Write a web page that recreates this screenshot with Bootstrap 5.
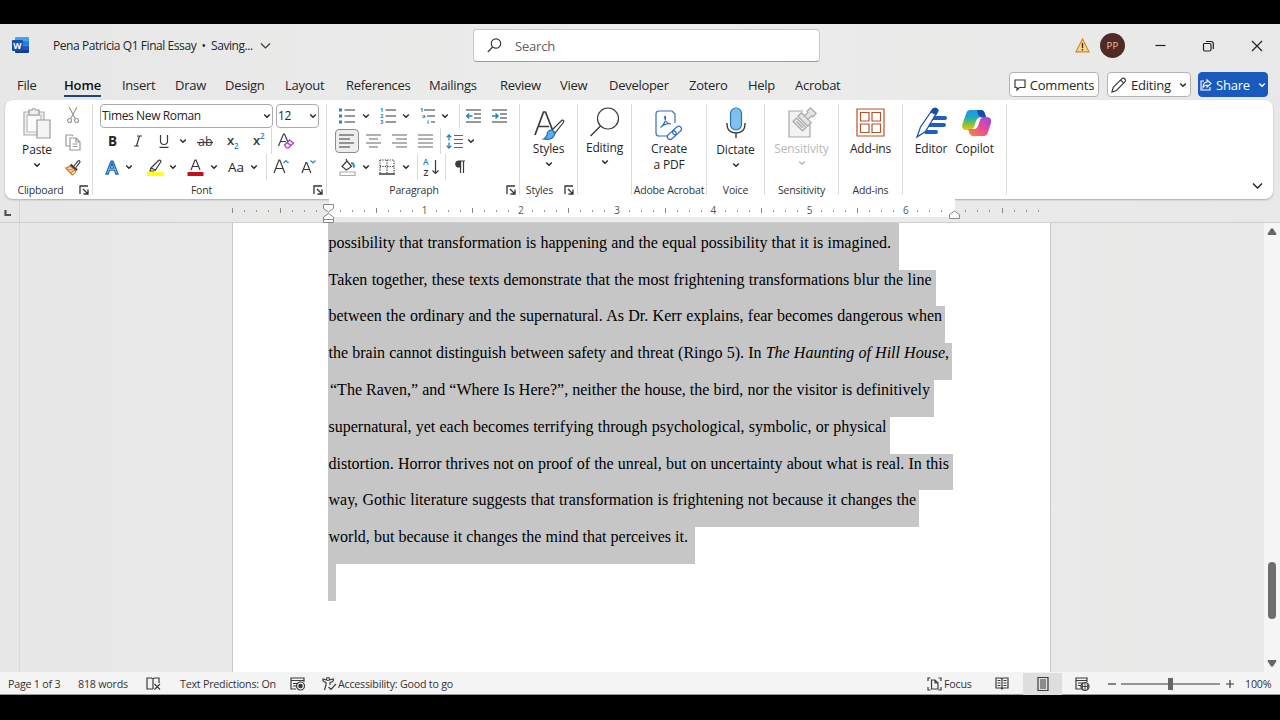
<!DOCTYPE html>
<html lang="en">
<head>
<meta charset="utf-8">
<title>Pena Patricia Q1 Final Essay - Word</title>
<link href="https://cdn.jsdelivr.net/npm/bootstrap@5.3.0/dist/css/bootstrap.min.css" rel="stylesheet">
<style>
body{width:1280px;height:720px;overflow:hidden;background:#000;color:#262626;font-family:"Open Sans","Noto Sans",sans-serif;font-size:12px;line-height:16px}
svg{display:block;flex:none;fill:none;stroke:#3b3b3b;stroke-width:1.2;overflow:visible}
svg text{stroke:none;fill:#3b3b3b}
.app{margin-top:24px;height:671px;background:linear-gradient(90deg,#e7e7e7,#ececeb 50%,#e8e8e8)}
.titlebar{height:42px;padding-top:1px}
.wlogo{margin-left:12px;width:18px}
.doctitle{margin-left:23px;font-size:12px;letter-spacing:-.43px;width:207px;white-space:pre;padding-top:1px}
.search{width:347px;height:33px;margin-left:201px;background:#fff;border:1px solid #c9c9c9;border-bottom-color:#9a9a9a;border-radius:4px;color:#606060;font-size:13px;letter-spacing:-.2px;padding-left:13px;gap:13px}
.warn{margin-right:2px}
.avatar{width:25px;height:25px;border-radius:50%;background:#4e2b26;color:#efc5a8;font-size:9.5px;letter-spacing:.2px}
.tabs{height:34px}
.tabgrid{display:grid;grid-template-columns:47px 58px 53px 50px 60px 61px 83px 71px 60px 49px 80px 59px 47px 60px;margin-left:17px;font-size:13px;letter-spacing:-.28px;width:980px;padding-top:8px}
.tabgrid span{justify-self:start;height:23px;padding-top:1px;line-height:20px;white-space:nowrap}
.tabgrid .on{font-weight:600;letter-spacing:-.15px;border-bottom:2px solid #1c4587;color:#111}
.pill{height:25px;margin-top:6px;border:1px solid #b3b3b3;border-radius:4px;background:#fff;font-size:13px;letter-spacing:-.22px;white-space:nowrap}
.p1{width:90px;margin-left:12px}.p2{width:84px;margin-left:8px}.p3{width:70px;margin-left:7px;background:#1a5abf;border-color:#1a5abf;color:#fff}
.ribbon{margin-left:5px;width:1268px;height:99px;background:#fff;border-radius:8px;box-shadow:0 1px 2px #aaa}
.grp{position:relative;height:91px;margin-top:4px;border-right:1px solid #dcdcdc;flex:none}
.grp .cap{height:14px;margin-bottom:-2px;font-size:10.5px;line-height:14px;letter-spacing:-.17px;text-align:center;white-space:nowrap;color:#333;position:relative;top:-.5px}
.launch{position:absolute;right:3px;bottom:0}
.g1{width:88px}.g2{width:234px}.g3{width:193px}.g4{width:58px}.g5{width:54px}.g6{width:75px}.g7{width:58px}.g8{width:74px}.g9{width:64px}.g10{width:104px}
.ctl{height:26px}.ctl>*{flex:none;display:flex;align-items:center;justify-content:center;height:26px}
.ctl.top{height:24px}.ctl.top>*{height:24px}
.u1{width:1px}.u2{width:2px}.u4{width:4px}.u6{width:6px}.u7{width:7px}.u8{width:8px}.u10{width:10px}.u12{width:12px}.u14{width:14px}.u16{width:16px}.u20{width:20px}.u22{width:22px}.u24{width:24px}.u25{width:25px}.u26{width:26px}.u28{width:28px}.u30{width:30px}
.bold-b{font-size:13.5px}
.aa{font-size:13.5px}
.vr1{width:1px;background:#d9d9d9}
.box{height:24px!important;border:1px solid #aaa;border-radius:4px;justify-content:space-between!important;padding:0 1px;letter-spacing:-.37px}
.fname{width:173px}.fsize{width:43px;margin-left:3px}
.big{font-size:12px;letter-spacing:-.15px;line-height:15.5px;text-align:center;color:#262626;white-space:nowrap}
.big .chev{margin:4px auto 0}
.ico{height:37px;display:flex;align-items:center;justify-content:center}
.ico.lift{height:35.5px}
.ico.tall{height:38px}
.paste{width:64px}.clipcol{width:8px;padding-top:3px;gap:11px}
.active-btn{background:#ededed;border:1px solid #8c8c8c;border-radius:4px;height:24px!important;width:24px;margin:0 1px}
.ruler{height:24px;border-bottom:1px solid #cfcfcf;position:relative}
.corner{width:20px;border-right:1px solid #d5d5d5}
.scale{margin-left:206px;width:820px;height:19px;background:linear-gradient(#fff,#fff) 102.5px 0/626px 18px no-repeat}
.scale span{flex:0 0 12.04px;height:23px;line-height:23px;text-align:center;font-size:10px;color:#555}
.tick::before{content:"";display:inline-block;width:1px;height:5px;background:#888;vertical-align:1px}
.dot::before{content:"";display:inline-block;width:1px;height:2px;background:#999;vertical-align:2px}
.marker{position:absolute}
.m1{left:323px;top:1px}.m2{left:949px;top:0}
.canvas{height:449px}
.gutter{width:20px;border-right:1px solid #d9d9d9}
.desk{width:1244px;padding-left:212px}
.sheet{width:819px;height:449px;background:#fff;border:solid #c8c8c8;border-width:0 1px;padding-left:95px;overflow:hidden;font-family:"Liberation Serif",serif;font-size:16px;line-height:20px;color:#000}
.sel{height:36.84px;background:#c6c6c6;text-align:justify;text-align-last:justify;white-space:nowrap;padding-left:.5px}
.sel:first-child{height:46.5px;padding-top:9.5px;width:571px;padding-right:8px}
.sel:nth-child(2){width:607.5px;padding-right:4px}
.sel:nth-child(3){width:617px;padding-right:3px}
.sel:nth-child(4){width:624px;padding-right:3px}
.sel:nth-child(5){width:606px;padding-left:2px;padding-right:4px}
.sel:nth-child(6){width:562px;padding-right:3.5px}
.sel:nth-child(7){width:625px;padding-right:4px}
.sel:nth-child(8){width:591px;padding-right:3px}
.sel:nth-child(9){width:367px;padding-right:7px}
.sel:nth-child(10){width:8px}
.scroller{width:16px;background:#f5f5f5;padding:5px 0 5px}
.thumb{width:8px;height:57px;border-radius:4px;background:#6d6d6d;margin-top:327px}
.status{height:23px;padding-top:1px;background:#f4f4f4;border-bottom:1px solid #999;font-size:10.7px;letter-spacing:-.22px;color:#333;white-space:nowrap}
.status>*{flex:none}
.s1{margin-left:8px;width:70px}.s2{width:68px}.s3{width:34px}.s4{width:110px}.s5{width:32px}.s6{width:16px}.s7{width:589px}
.s8{width:17px}.s9{width:51px}.s10{width:28px}.viewon{width:39px;height:22px;background:#dedede}.s11{width:46px;padding-left:13px}.s12{width:13px}.s13{width:99px}.s14{width:25px;padding-left:6px}.s15{width:30px}
</style>
</head>
<body>
<svg width="0" height="0" class="position-absolute"><defs>
<symbol id="cv" viewBox="0 0 8 6"><path d="M1.2 1.5 4 4.2 6.8 1.5" stroke="currentColor" stroke-width="1.4" fill="none"/></symbol>
<symbol id="la" viewBox="0 0 10 10"><path d="M1 9V1H9M4 4l4.500 4.500M9 4.500V9H4.500" stroke="#333" stroke-width="1.300" fill="none"/></symbol>
<linearGradient id="ca" x1="0" y1="0" x2="0" y2="1"><stop offset="0" stop-color="#2294f5"/><stop offset=".35" stop-color="#18a9c4"/><stop offset=".7" stop-color="#7cc43c"/><stop offset="1" stop-color="#f5c50b"/></linearGradient>
<linearGradient id="cb" x1="1" y1="0" x2="0" y2="1"><stop offset="0" stop-color="#8d4be8"/><stop offset=".45" stop-color="#e5489b"/><stop offset="1" stop-color="#ff8a3c"/></linearGradient>
</defs></svg>
<main class="app">
<header class="titlebar d-flex align-items-center">
  <svg class="wlogo" width="18" height="17" viewBox="0 0 18 17"><g stroke="none"><path d="M4 0h12q1 0 1 1v4H3V1q0-1 1-1z" fill="#41a5ee"/><path d="M3 4.300h14v4.200H3z" fill="#2b7cd3"/><path d="M3 8.500h14v4H3z" fill="#185abd"/><path d="M3 12.300h14V15q0 1-1 1H4q-1 0-1-1z" fill="#103f91"/><rect y="3" width="11" height="11" rx="1" fill="#174fa8"/></g><text x="1.200" y="11.500" font-size="8.500" font-weight="700" style="fill:#fff">W</text></svg>
  <div class="doctitle">Pena Patricia Q1 Final Essay  •  Saving...</div>
  <svg width="12" height="8" viewBox="0 0 12 8"><path d="M1 1.500 5.500 6 10 1.500"/></svg>
  <div class="search d-flex align-items-center"><svg width="15" height="15" viewBox="0 0 15 15"><circle cx="9" cy="5.500" r="4.700"/><path d="M5.600 9 .8 14"/></svg><span>Search</span></div>
  <svg class="warn ms-auto" width="15" height="15" viewBox="0 0 15 15"><path d="M7.500 1 14 13.800H1z" fill="#fbd98a" stroke="#c98a2b"/><path d="M7.500 5v5M7.500 11v1.500" stroke="#333" stroke-width="1.400"/></svg>
  <div class="avatar d-flex align-items-center justify-content-center ms-2">PP</div>
  <svg width="155" height="14" viewBox="0 0 155 14"><path d="M30.500 6.500h10" stroke="#222"/><path d="M79 4.500h5.500q1.500 0 1.500 1.500v4.500q0 1.500-1.500 1.500H80q-1.500 0-1.500-1.500V5.500q0-1 .5-1zM81 2.500h5q2.300 0 2.300 2.300V10" stroke="#222"/><path d="M127 2l10 10M137 2l-10 10" stroke="#222"/></svg>
</header>
<nav class="tabs d-flex align-items-start">
  <div class="tabgrid"><span>File</span><span class="on">Home</span><span>Insert</span><span>Draw</span><span>Design</span><span>Layout</span><span>References</span><span>Mailings</span><span>Review</span><span>View</span><span>Developer</span><span>Zotero</span><span>Help</span><span>Acrobat</span></div>
  <div class="pill p1 d-flex align-items-center justify-content-center gap-1"><svg width="12" height="12" viewBox="0 0 12 12"><path d="M1 1h10v7.500H5.500L3 11V8.500H1z"/></svg>Comments</div>
  <div class="pill p2 d-flex align-items-center justify-content-center gap-1"><svg width="16" height="16" viewBox="0 0 16 16"><path d="M1 15l1.200-4.600L11 1.600q1.200-1.200 2.700.2t.4 2.800L5.400 13.500zM9.600 3l3.200 3.200"/></svg>Editing<svg class="ms-1" width="8" height="6"><use href="#cv"/></svg></div>
  <div class="pill p3 d-flex align-items-center justify-content-center gap-1"><svg width="12" height="12" viewBox="0 0 12 12"><path d="M4 2H1v9h9V8M7 1l4 3.500L7 8V6Q4.500 6 3 8.500 3 3.500 7 3z" stroke="#fff" stroke-width="1.100"/></svg>Share<svg class="ms-1" width="8" height="6"><use href="#cv"/></svg></div>
</nav>

<section class="ribbon d-flex">
  <div class="grp g1 d-flex flex-column">
    <div class="flex-grow-1 d-flex">
      <div class="big paste"><div class="ico tall"><svg width="28" height="32" viewBox="0 0 28 32"><path d="M1 5h20v23H1z" fill="#f1f1f1" stroke="#aaa"/><path d="M4 8h14v17H4z" fill="#fafafa" stroke="#bbb"/><path d="M6 3h3q1-3 4 0h3v5H6z" fill="#eee" stroke="#999"/><path d="M14 13h13v18H14z" fill="#f4f4f4" stroke="#999"/></svg></div><div>Paste</div><svg class="chev" width="8" height="6"><use href="#cv"/></svg></div>
      <div class="clipcol d-flex flex-column align-items-center">
        <svg width="12" height="16" viewBox="0 0 12 16"><g stroke="#999"><path d="M2 0l6.500 12M10 0 3.500 12"/><circle cx="2.500" cy="13.500" r="2"/><circle cx="9.500" cy="13.500" r="2"/></g></svg>
        <svg width="16" height="16" viewBox="0 0 16 16"><path d="M5 12H1V1h6l1 1M5 4h6l4 4v8H5zM11 4v4h4M7.500 10h5M7.500 12.500h5" stroke="#999"/></svg>
        <svg width="16" height="14" viewBox="0 1 16 14"><path d="M9 6l4-5q2-1 2 1l-4 5.500" fill="#fff"/><path d="M5 6Q3 8 .8 8l6.500 7q3.500-2 4-4.500z" fill="#fbe3c2" stroke="#d9781d"/><path d="M3 10l5-1M5.500 12.500l4.500-2.500" stroke="#d9781d"/><path d="M5.500 4.500l6.500 5.500" stroke-width="2.200"/></svg>
      </div>
    </div>
    <div class="cap pe-3">Clipboard</div><svg class="launch" width="10" height="10"><use href="#la"/></svg>
  </div>

  <div class="grp g2 d-flex flex-column">
    <div class="flex-grow-1" style="padding-left:7px">
      <div class="ctl top d-flex"><div class="box fname">Times New Roman<svg width="8" height="6"><use href="#cv"/></svg></div><div class="box fsize">12<svg width="8" height="6"><use href="#cv"/></svg></div></div>
      <div class="ctl d-flex">
        <b class="u25 bold-b">B</b>
        <span class="u26"><svg width="10" height="12" viewBox="0 0 10 12"><path d="M4 1h5M1 11h5M6.500 1l-3 10"/></svg></span>
        <span class="u25"><svg width="12" height="13" viewBox="0 0 12 13"><path d="M2.500 0v6q0 3.500 3.500 3.500T9.500 6V0M1.500 12.300h9"/></svg></span>
        <span class="u14"><svg width="8" height="6"><use href="#cv"/></svg></span>
        <span class="u30"><svg width="16" height="14"><text x="1" y="12" font-size="12.500">ab</text><path d="M0 8.500h16"/></svg></span>
        <span class="u26"><svg width="14" height="16"><text x="1" y="12" font-size="13" font-weight="600">x</text><text x="8" y="16" font-size="8" font-weight="600" style="fill:#1f86c7">2</text></svg></span>
        <span class="u25"><svg width="14" height="16"><text x="1" y="12" font-size="13" font-weight="600">x</text><text x="8" y="6" font-size="8" font-weight="600" style="fill:#1f86c7">2</text></svg></span>
        <span class="vr1"></span>
        <span class="u28"><svg width="16" height="16" viewBox="0 0 16 16"><path d="M.5 13 5.500 1h1l3.500 8M2.500 8.500H8"/><path d="M6.500 12l5-5 4 3-5 5h-2zM9 9.500l4 3" stroke="#9b3fb5" fill="#f6e6fa"/></svg></span>
      </div>
      <div class="ctl d-flex">
        <span class="u24"><svg width="14" height="15" viewBox="0 0 14 15"><path d="M1 14 6 1.200h2L13 14h-2.200L9.500 10.200h-5L3.200 14zM5.200 8.200h3.600L7 3z" fill="#bfe0f8" stroke="#1b6cb5" stroke-width="1.300"/></svg></span>
        <span class="u10"><svg width="8" height="6"><use href="#cv"/></svg></span><i class="u8"></i>
        <span class="u26"><svg width="17" height="17" viewBox="0 0 17 17"><path d="M4 9l7-7q2-2 3 .5L8.500 11zM4 9l-1 3h4l1.500-1.500"/><path d="M0 15h17" stroke="#ffff18" stroke-width="4"/></svg></span>
        <span class="u10"><svg width="8" height="6"><use href="#cv"/></svg></span><i class="u6"></i>
        <span class="u22"><svg width="17" height="17" viewBox="0 0 17 17"><path d="M4 11 8 1h1l4 10M5.500 7.500h6"/><path d="M.5 15h16" stroke="#c40f18" stroke-width="4"/></svg></span>
        <span class="u16"><svg width="8" height="6"><use href="#cv"/></svg></span>
        <span class="u28 aa">Aa</span><span class="u8"><svg width="8" height="6"><use href="#cv"/></svg></span><i class="u8"></i><span class="vr1"></span>
        <span class="u28"><svg width="16" height="16" viewBox="0 0 16 16"><path d="M1 14 6 1h.8l5 13M3 9.500h7"/><path d="M10.500 4 13 1.500 15.500 4" stroke="#1f86c7"/></svg></span>
        <span class="u26"><svg width="14" height="16" viewBox="0 0 14 16"><path d="M1 14 5 3.500h.8l4 10.500M2.500 10.500h6"/><path d="M9.500 1.500 12 4l2.500-2.500" stroke="#1f86c7"/></svg></span>
      </div>
    </div>
    <div class="cap pe-3">Font</div><svg class="launch" width="10" height="10"><use href="#la"/></svg>
  </div>

  <div class="grp g3 d-flex flex-column">
    <div class="flex-grow-1" style="padding-left:7px">
      <div class="ctl top d-flex">
        <span class="u26"><svg width="16" height="16" viewBox="0 0 16 16"><path d="M5.500 2H16M5.500 8H16M5.500 14H16" stroke="#777" stroke-width="1.300"/><path d="M0 2h3M0 8h3M0 14h3" stroke="#1f86c7" stroke-width="3"/></svg></span>
        <span class="u12"><svg width="8" height="6"><use href="#cv"/></svg></span><i class="u4"></i>
        <span class="u24"><svg width="16" height="16" viewBox="0 0 16 16"><path d="M5.500 2H16M5.500 8H16M5.500 14H16" stroke="#777" stroke-width="1.300"/><g font-size="6" font-weight="700"><text y="4" style="fill:#1f86c7">1</text><text y="10.200" style="fill:#1f86c7">2</text><text y="16.400" style="fill:#1f86c7">3</text></g></svg></span>
        <span class="u12"><svg width="8" height="6"><use href="#cv"/></svg></span><i class="u6"></i>
        <span class="u20"><svg width="16" height="16" viewBox="0 0 16 16"><path d="M4 2H15M7 8h8M11 14h4" stroke="#777" stroke-width="1.300"/><g font-size="6" font-weight="700"><text y="4" style="fill:#1f86c7">1</text><text x="2" y="10" style="fill:#1f86c7">a</text><text x="7" y="16.400" style="fill:#1f86c7">i</text></g></svg></span>
        <span class="u14"><svg width="8" height="6"><use href="#cv"/></svg></span><i class="u7"></i><span class="vr1"></span>
        <span class="u26"><svg width="15" height="14" viewBox="0 0 15 14"><path d="M0 1h15M8 5h7M8 9h7M0 13h15" stroke="#777" stroke-width="1.300"/><path d="M6.500 7H1M3.200 4.500.7 7l2.500 2.500" stroke="#1f86c7" stroke-width="1.500"/></svg></span>
        <span class="u26"><svg width="15" height="14" viewBox="0 0 15 14"><path d="M0 1h15M8 5h7M8 9h7M0 13h15" stroke="#777" stroke-width="1.300"/><path d="M0 7h5.500M3.500 4.500 6 7 3.500 9.500" stroke="#1f86c7" stroke-width="1.500"/></svg></span>
      </div>
      <div class="ctl d-flex align-items-center">
        <span class="active-btn"><svg width="16" height="14" viewBox="0 0 16 14"><path d="M0 1h15M0 5h11M0 9h15M0 13h11"/></svg></span>
        <span class="u26"><svg width="15" height="14" viewBox="0 0 15 14"><path d="M0 1h15M3 5h9M0 9h15M3 13h9" stroke="#666"/></svg></span>
        <span class="u26"><svg width="15" height="14" viewBox="0 0 15 14"><path d="M0 1h15M4 5h11M0 9h15M4 13h11" stroke="#666"/></svg></span>
        <span class="u26"><svg width="15" height="14" viewBox="0 0 15 14"><path d="M0 1h15M0 5h15M0 9h15M0 13h15" stroke="#666"/></svg></span>
        <i class="u2"></i><span class="vr1"></span>
        <span class="u26"><svg width="17" height="15" viewBox="0 0 17 15"><path d="M8 1.500h9M8 5.500h9M8 9.500h9M8 13.500h9" stroke="#666"/><path d="M3 1v5.500M.7 3.300 3 1l2.300 2.300M3 8.500V14M.7 11.700 3 14l2.300-2.300" stroke="#1f86c7" stroke-width="1.300"/></svg></span>
        <span class="u8"><svg width="8" height="6"><use href="#cv"/></svg></span>
      </div>
      <div class="ctl d-flex">
        <span class="u26"><svg width="17" height="17" viewBox="0 0 17 17"><path d="M3 7.500 8 2l4.500 5.500L7.500 11zM8 2 7 0"/><path d="M12 4.500q3-1 3 4" stroke="#1f86c7" stroke-width="2"/><path d="M1 13h15v3.500H1z" stroke="#aaa" fill="#fff"/></svg></span>
        <span class="u12"><svg width="8" height="6"><use href="#cv"/></svg></span><i class="u1"></i>
        <span class="u28"><svg width="16" height="16" viewBox="0 0 16 16"><path d="M1 1h14v13M1 1v13M8 1v13M1 7.500h14" stroke-dasharray="1.200 1.200"/><path d="M0 15h16" stroke-width="1.500"/></svg></span>
        <span class="u10"><svg width="8" height="6"><use href="#cv"/></svg></span><i class="u6"></i><span class="vr1"></span>
        <span class="u26"><svg width="18" height="18"><text x="1" y="7" font-size="8.500" font-weight="600" style="fill:#1f86c7">A</text><text x="1.500" y="18" font-size="8.500" font-weight="600">Z</text><path d="M13.500 2v13.500M10.500 12.500l3 3 3-3"/></svg></span>
        <i class="u1"></i><span class="vr1"></span>
        <span class="u28"><svg width="11" height="14" viewBox="0 0 11 14"><path d="M5.500 1H10M5.500 1v12M8.500 1v12"/><path d="M5.500 1H4Q.8 1 .8 4T4 7h1.500z" fill="#3b3b3b"/></svg></span>
      </div>
    </div>
    <div class="cap" style="padding-right:18px">Paragraph</div><svg class="launch" width="10" height="10"><use href="#la"/></svg>
  </div>

  <div class="grp g4 d-flex flex-column"><div class="big flex-grow-1"><div class="ico pt-1"><svg width="30" height="30" viewBox="0 0 30 30"><path d="M1 25 9.500 2h2l7 18M4.500 16.500H15" stroke-width="1.700"/><path d="M18 20 28 10q3 0 1 3l-8 10z" fill="#fff"/><path d="M18 20q-5 0-5 5-1 3-3.500 4 10 2 11.500-6z" fill="#59aef0" stroke="#1b6cb5"/></svg></div><div>Styles</div><svg class="chev" width="8" height="6"><use href="#cv"/></svg></div><div class="cap" style="padding-right:18px">Styles</div><svg class="launch" width="10" height="10"><use href="#la"/></svg></div>
  <div class="grp g5"><div class="big"><div class="ico lift"><svg width="30" height="30" viewBox="0 0 30 30"><circle cx="18" cy="11.500" r="10.500"/><path d="M10.500 19 .5 29" stroke-width="1.500"/></svg></div><div>Editing</div><svg class="chev" width="8" height="6"><use href="#cv"/></svg></div></div>
  <div class="grp g6 d-flex flex-column"><div class="big flex-grow-1"><div class="ico pt-1"><svg width="28" height="29" viewBox="0 0 28 29"><g stroke="#2f6fc2"><path d="M12 26H4q-3 0-3-3V4q0-3 3-3h13l3 3v9"/><path d="M5.500 17.500Q11 13 10.500 7q0-1.500-1 0 1 6.500 6.500 7-5-1.500-10.500 3.500z"/><g transform="rotate(-42 20 22)"><rect x="10.500" y="19.500" width="10" height="5.500" rx="2.700"/><rect x="17.500" y="19.500" width="10" height="5.500" rx="2.700"/></g></g></svg></div><div>Create<br>a PDF</div></div><div class="cap">Adobe Acrobat</div></div>
  <div class="grp g7 d-flex flex-column"><div class="big flex-grow-1"><div class="ico tall"><svg width="20" height="31" viewBox="0 0 20 31"><rect x="4.500" y="0" width="11" height="22" rx="5.500" fill="#7ec0ef" stroke="#2c75ad"/><path d="M1 15v1q0 9 9 9t9-9v-1M10 25v5" stroke-width="1.400"/></svg></div><div>Dictate</div><svg class="chev" width="8" height="6"><use href="#cv"/></svg></div><div class="cap">Voice</div></div>
  <div class="grp g8 d-flex flex-column"><div class="big flex-grow-1" style="color:#b9b9b9"><div class="ico"><svg width="28" height="30" viewBox="0 0 28 30"><g stroke="#a8a8a8"><path d="M15 3H1v26h21V15" fill="#f3f3f3"/><g transform="rotate(45 19 9)"><path d="M12 10h14v5H12zM16.500 10V5h-1.500V0h8v5h-1.500v5" fill="#e4e4e4"/></g><path d="M5 13.500 8.500 10l9.500 9.500-3.500 3.500zM8.500 13.500l6.500 6.500" fill="#eaeaea"/></g></svg></div><div>Sensitivity</div><svg class="chev" width="8" height="6" style="margin-top:3px"><use href="#cv"/></svg></div><div class="cap">Sensitivity</div></div>
  <div class="grp g9 d-flex flex-column"><div class="big flex-grow-1"><div class="ico"><svg width="29" height="29" viewBox="0 0 29 29"><path d="M1 1h27v27H1zM4.500 4.500h8.500v8.500H4.500zM16 4.500h8.500v8.500H16zM4.500 16h8.500v8.500H4.500zM16 16h8.500v8.500H16z" fill="#fff" stroke="#b5532d"/></svg></div><div>Add-ins</div></div><div class="cap">Add-ins</div></div>
  <div class="grp g10 d-flex">
    <div class="big" style="width:56px"><div class="ico"><svg width="31" height="31" viewBox="0 0 31 31"><path d="M16 11h13M13 18h15M10 25h10" stroke="#1f5fc4" stroke-width="4" stroke-linecap="round"/><path d="M1 30 4.500 20 17 2q3-2 5 1.500L9.500 24.500z" fill="#fff" stroke="#174ea6"/><path d="M15 5l2-3q3-2 5 1.500l-2 4z" fill="#174ea6" stroke="#174ea6"/></svg></div><div>Editor</div></div>
    <div class="big" style="width:35px"><div class="ico"><svg width="30" height="28" viewBox="0 0 30 28"><g stroke="none"><path d="M8 1h11q3 0 4 4l1 3h-5q-3 0-4 4l-2 6q-1 3-4 3H4q-5 0-3.500-6L4 5q1-4 4-4z" fill="url(#ca)"/><path d="M15 1h4q3 0 4 4l1 3h-5q-2 0-3-3z" fill="#1b48b5"/><path d="M22 27H11q-3 0-4-4l-1-3h5q3 0 4-4l2-5q1-3 4-3h4q5 0 4 6l-3 9q-1 4-4 4z" fill="url(#cb)"/><path d="M17 9q-2 0-3 3l-2 6q-.5 2-2 2h3q2 0 3-3l2-6q.5-2 2-2z" fill="#fff"/></g></svg></div><div style="margin-left:-4px">Copilot</div></div>
  </div>
  <svg class="ms-auto align-self-end" style="margin:0 10px 9px" width="11" height="8" viewBox="0 0 11 8"><path d="M1 1.500 5.500 6 10 1.500" stroke="#222" stroke-width="1.400"/></svg>
</section>

<div class="ruler d-flex">
  <div class="corner d-flex align-items-center"><svg class="ms-1 mt-1" width="7" height="8" viewBox="0 0 7 8"><path d="M1.500 1v5H7" stroke="#555" stroke-width="2.200"/></svg></div>
  <div class="scale d-flex" id="scale"></div>
  <svg class="marker m1" width="11" height="23" viewBox="0 0 11 23"><path d="M.5 8.500v-4h10v4l-5 3.500zM.5 22.500V17l5-3.500 5 3.500v5.500zM.5 19.500h10" fill="#fff" stroke="#888" stroke-width="1"/></svg>
  <svg class="marker m2" width="11" height="23" viewBox="0 0 11 23"><path d="M.5 19.500V15.500l5-3.500 5 3.500v4z" fill="#fff" stroke="#888" stroke-width="1"/></svg>
</div>

<div class="canvas d-flex">
  <div class="gutter"></div>
  <div class="desk"><article class="sheet">
    <div class="sel">possibility that transformation is happening and the equal possibility that it is imagined.</div>
    <div class="sel">Taken together, these texts demonstrate that the most frightening transformations blur the line</div>
    <div class="sel">between the ordinary and the supernatural. As Dr. Kerr explains, fear becomes dangerous when</div>
    <div class="sel">the brain cannot distinguish between safety and threat (Ringo 5). In <i>The Haunting of Hill House</i>,</div>
    <div class="sel">“The Raven,” and “Where Is Here?”, neither the house, the bird, nor the visitor is definitively</div>
    <div class="sel">supernatural, yet each becomes terrifying through psychological, symbolic, or physical</div>
    <div class="sel">distortion. Horror thrives not on proof of the unreal, but on uncertainty about what is real. In this</div>
    <div class="sel">way, Gothic literature suggests that transformation is frightening not because it changes the</div>
    <div class="sel">world, but because it changes the mind that perceives it.</div>
    <div class="sel"></div>
  </article></div>
  <div class="scroller d-flex flex-column align-items-center"><svg width="10" height="7" viewBox="0 0 10 7"><path d="M4 .5h2L9.500 6q0 1-1 1h-7q-1 0-1-1z" fill="#666" stroke="none"/></svg><div class="thumb"></div><svg class="mt-auto" width="10" height="7" viewBox="0 0 10 7"><path d="M4 6.500h2L9.500 1q0-1-1-1h-7q-1 0-1 1z" fill="#666" stroke="none"/></svg></div>
</div>

<footer class="status d-flex align-items-center">
  <span class="s1">Page 1 of 3</span><span class="s2">818 words</span>
  <span class="s3"><svg width="15" height="13" viewBox="0 0 15 13"><path d="M7 12H1V1h4.500L7 2l1.500-1H13v5M7 2v10M8.500 7l5.500 5.500M14 7l-5.500 5.500"/></svg></span>
  <span class="s4">Text Predictions: On</span>
  <span class="s5"><svg width="16" height="14" viewBox="0 0 16 14"><path d="M6 12H1V1h13v4M1 3.500h13M3 6.500h5M3 9h3"/><circle cx="10.500" cy="9" r="4"/><circle cx="10.500" cy="9" r="1.700" fill="#333"/></svg></span>
  <span class="s6"><svg width="15" height="14" viewBox="0 0 15 14"><circle cx="6" cy="2" r="1.500"/><path d="M4.500 3 1 2q-1 2 3 3.500V8L2.500 13M7.500 3 11 2q2 2-3 3.500V8M6.500 10l2.500 2.500L14 7"/></svg></span>
  <span class="s7">Accessibility: Good to go</span>
  <span class="s8"><svg width="15" height="14" viewBox="0 0 15 14"><path d="M3.500 1H1v3M11.500 1H14v3M1 10v3h2.500M14 10v3h-2.500M4.500 3H8l3 3v6H4.500zM8 3v3h3"/></svg></span><span class="s9">Focus</span>
  <span class="s10"><svg width="14" height="13" viewBox="0 0 14 13"><path d="M7 2 6 1H1v10h5l1 1 1-1h5V1H8zM7 2v10M2.500 3.500h3M2.500 6h3M2.500 8.500h3M8.500 3.500h3M8.500 6h3M8.500 8.500h3"/></svg></span>
  <span class="viewon d-flex align-items-center justify-content-center"><svg width="12" height="14" viewBox="0 0 12 14"><path d="M1 .5h10v13H1zM3 3h6M3 5h6M3 7h6M3 9h6M3 11h6"/></svg></span>
  <span class="s11"><svg width="15" height="14" viewBox="0 0 15 14"><path d="M6 12H1V1h11v4M1 3.500h11M3 6h5M3 8.500h3"/><circle cx="10" cy="9.500" r="4"/><path d="M6 9.500h8M10 5.500v8M8 6q-1.500 3.500 0 7M12 6q1.500 3.500 0 7" stroke-width=".9"/></svg></span>
  <span class="s12"><svg width="8" height="8"><path d="M0 4h8"/></svg></span>
  <span class="s13"><svg width="99" height="12"><path d="M0 6h99" stroke="#777" stroke-width="1.500"/><path d="M49.500 0v12" stroke="#666" stroke-width="5"/></svg></span>
  <span class="s14"><svg width="8" height="8"><path d="M0 4h8M4 0v8"/></svg></span>
  <span class="s15">100%</span>
</footer>
</main>
<script>
// One cell per eighth of an inch, from one inch left of the margin.
const scale = document.getElementById('scale');
for (let k = 0; k < 68; k++) {
  const cell = document.createElement('span'), inch = (k - 8) / 8;
  if (inch === 0 || inch === 6.5) { /* indent markers sit here */ }
  else if (inch > 0 && inch < 7 && inch % 1 === 0) cell.textContent = inch;
  else cell.classList.add(k % 4 === 0 ? 'tick' : 'dot');
  scale.append(cell);
}
</script>
<script src="https://cdn.jsdelivr.net/npm/bootstrap@5.3.0/dist/js/bootstrap.bundle.min.js"></script>
</body>
</html>
